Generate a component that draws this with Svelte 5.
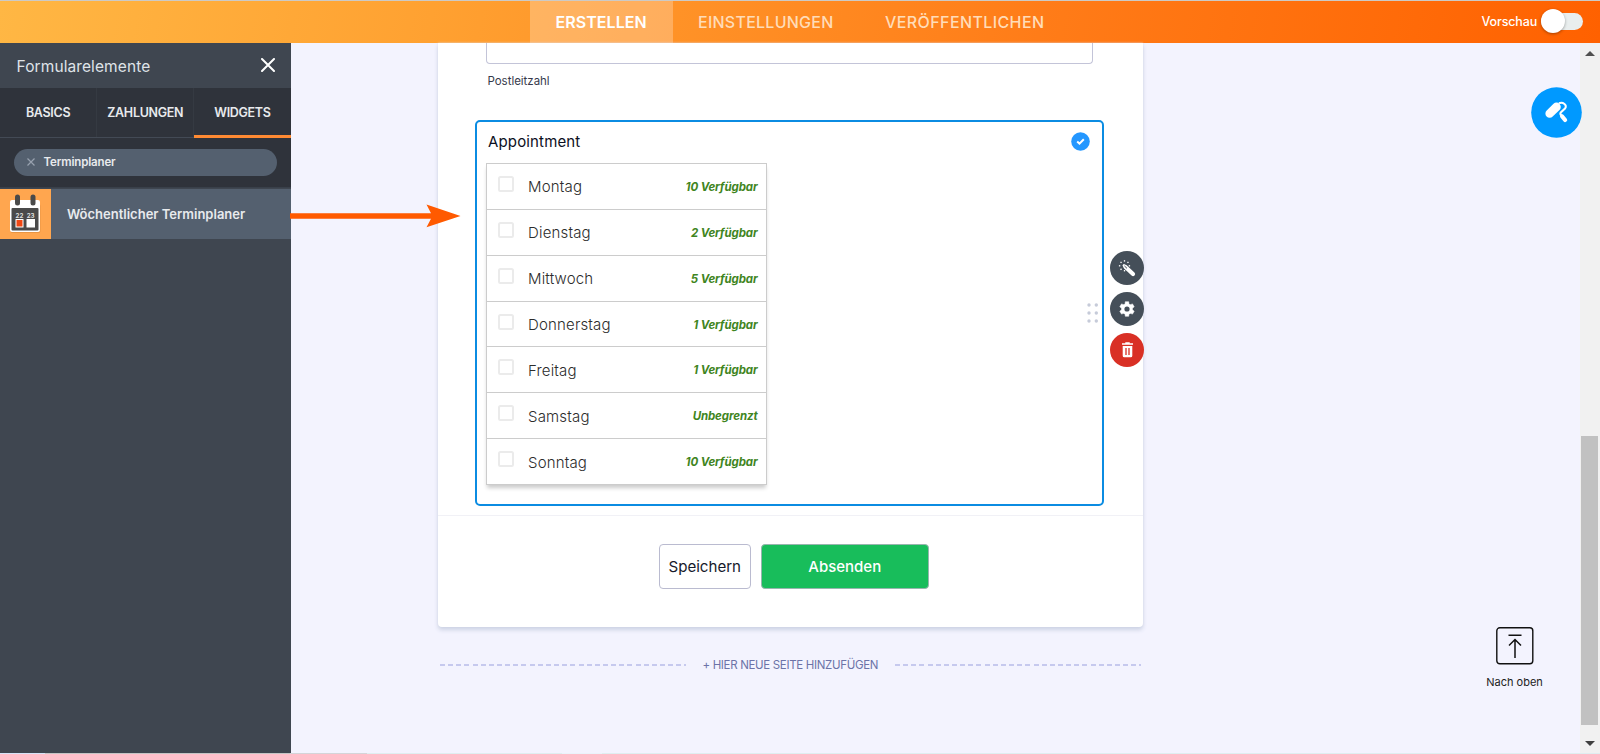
<script>
  const days = [
    ['Montag', '10 Verfügbar'],
    ['Dienstag', '2 Verfügbar'],
    ['Mittwoch', '5 Verfügbar'],
    ['Donnerstag', '1 Verfügbar'],
    ['Freitag', '1 Verfügbar'],
    ['Samstag', 'Unbegrenzt'],
    ['Sonntag', '10 Verfügbar']
  ];
  const rays = [0, 45, 90, 180, 225, 270, 315];
  const teeth = [0, 60, 120, 180, 240, 300];
</script>

<div class="app">
  <header>
    <nav>
      <a class="on"><span>ERSTELLEN</span></a>
      <a><span>EINSTELLUNGEN</span></a>
      <a class="publish"><span>VERÖFFENTLICHEN</span></a>
    </nav>
    <div class="preview"><span>Vorschau</span><div class="toggle"><i></i></div></div>
  </header>

  <div class="body">
    <aside>
      <div class="title">
        <span>Formularelemente</span>
        <svg width="14" height="14" viewBox="0 0 14 14"><path d="M1 1 13 13M13 1 1 13" stroke="#fff" stroke-width="2" stroke-linecap="round" /></svg>
      </div>
      <div class="tabs"><div>BASICS</div><div>ZAHLUNGEN</div><div class="on">WIDGETS</div></div>
      <div class="search">
        <div class="pill">
          <svg width="8" height="8" viewBox="0 0 8 8"><path d="M.5.5 7.5 7.5M7.5.5.5 7.5" stroke="#98a1af" stroke-width="1.200" /></svg>
          <span>Terminplaner</span>
        </div>
      </div>
      <div class="widget">
        <svg width="51" height="50" viewBox="0 0 51 50">
          <rect width="51" height="50" fill="#ffa64f" />
          <rect x="10.500" y="15" width="30" height="29" rx="2" fill="#d98a3e" opacity=".6" />
          <rect x="10" y="11" width="30" height="32" rx="2" fill="#fff" />
          <rect x="11.500" y="19" width="27" height="22.500" rx="1" fill="#4a4a4a" />
          <rect x="15" y="5.500" width="5" height="11" rx="2.500" fill="#4a4a4a" />
          <rect x="30.500" y="5.500" width="5" height="11" rx="2.500" fill="#4a4a4a" />
          <text x="15.500" y="28.500" font-size="6.200" font-weight="700" fill="#ddd">22</text>
          <text x="26.700" y="28.500" font-size="6.200" font-weight="700" fill="#ddd">23</text>
          <rect x="15.500" y="30" width="8" height="8.500" fill="#fff" />
          <rect x="16.500" y="31" width="6" height="6.500" fill="#f04713" />
          <rect x="26.500" y="30" width="8.500" height="8.500" fill="#fff" />
        </svg>
        <span>Wöchentlicher Terminplaner</span>
      </div>
    </aside>

    <main>
      <section class="card">
        <div class="input"></div>
        <div class="hint">Postleitzahl</div>
        <div class="field">
          <div class="head">
            <span>Appointment</span>
            <svg width="19" height="19" viewBox="0 0 19 19"><circle cx="9.500" cy="9.500" r="9.300" fill="#2497ff" /><path d="m6.200 9.500 2.300 2.200 4.300-4.500" fill="none" stroke="#fff" stroke-width="2" /></svg>
          </div>
          <div class="list">
            {#each days as [day, free]}
              <div class="row"><i></i><span>{day}</span><b>{free}</b></div>
            {/each}
          </div>
          <svg class="drag" width="12" height="20" viewBox="0 0 12 20" fill="#c6cbd9">
            {#each [2, 10, 18] as y}<circle cx="2" cy={y} r="1.700" /><circle cx="9.300" cy={y} r="1.700" />{/each}
          </svg>
          <div class="tools">
            <svg width="34" height="34" viewBox="0 0 34 34">
              <circle cx="17" cy="17" r="17" fill="#454f59" />
              <path d="m15.500 16 7.500 7" stroke="#fff" stroke-width="4.200" stroke-linecap="round" />
              <path d="m14 14.500 2 2" stroke="#fff" stroke-width="2.800" stroke-linecap="round" />
              <path d="m14.700 15.200 2 1.900" stroke="#454f59" stroke-width="1" stroke-linecap="round" />
              {#each rays as r}<path d="M14.500 10.600V9.200" stroke="#fff" stroke-width="1.300" transform={`rotate(${r} 14.500 14.800)`} />{/each}
            </svg>
            <svg width="34" height="34" viewBox="0 0 34 34">
              <circle cx="17" cy="17" r="17" fill="#454f59" />
              {#each teeth as r}<path d="M14.900 12.500 15.300 9.700h3.400l.4 2.800z" fill="#fff" stroke="#fff" stroke-width=".5" stroke-linejoin="round" transform={`rotate(${r} 17 17)`} />{/each}
              <circle cx="17" cy="17" r="4.100" fill="none" stroke="#fff" stroke-width="3" />
            </svg>
            <svg width="34" height="34" viewBox="0 0 34 34">
              <circle cx="17" cy="17" r="17" fill="#d93025" />
              <path d="M12 11h11M15.300 10h4.400" stroke="#fff" stroke-width="1.700" />
              <path d="M12.700 13h9.600v9.800a1.500 1.500 0 0 1-1.500 1.500h-6.600a1.500 1.500 0 0 1-1.500-1.500z" fill="#fff" />
              <path d="M16 15v7M19 15v7" stroke="#d93025" stroke-width="1.300" />
            </svg>
          </div>
        </div>
        <div class="buttons"><button>Speichern</button><button class="go">Absenden</button></div>
      </section>
      <div class="newpage"><i></i><span>+ HIER NEUE SEITE HINZUFÜGEN</span><i></i></div>
      <svg class="arrow" width="171" height="24" viewBox="0 0 171 24"><path d="M0 9.200H141L136.500.5 170.500 12 136.500 23.200 141 14.800H0z" fill="#ff5a00" /></svg>
      <svg class="paint" width="51" height="51" viewBox="0 0 51 51">
        <circle cx="25.500" cy="25.500" r="25.300" fill="#0099ff" />
        <path d="m18.700 26.500 6.800-6.600" stroke="#fff" stroke-width="8.600" stroke-linecap="round" />
        <path d="M28 16.300c3.800-1.700 8.800 1.800 6 5.200l-4 3.700c-1.500 1.600-.2 2.700 1.200 4" fill="none" stroke="#fff" stroke-width="2.100" />
        <path d="m31.200 29.500 2.900 3.500" stroke="#fff" stroke-width="4.200" stroke-linecap="round" />
      </svg>
      <div class="totop">
        <svg width="38" height="38" viewBox="0 0 38 38" fill="none" stroke="#111"><rect x=".8" y=".8" width="36" height="36" rx="3" stroke-width="1.400" /><path d="M12.500 8.200h13M19 31V13M13 18.500l6-6 6 6" stroke-width="1.500" /></svg>
        <span>Nach oben</span>
      </div>
    </main>

    <div class="scroll">
      <svg width="10" height="5" viewBox="0 0 10 5"><path d="M0 5 5 0l5 5z" fill="#505050" /></svg>
      <div class="thumb"></div>
      <svg width="10" height="5" viewBox="0 0 10 5"><path d="M0 0h10L5 5z" fill="#404040" /></svg>
    </div>
  </div>
  <footer></footer>
</div>

<style>
  :global(body) { overflow: hidden; }
  * { box-sizing: border-box; }
  svg { display: block; flex: none; }
  .app { width: 1600px; height: 754px; display: flex; flex-direction: column; font-family: Inter, "Liberation Sans", sans-serif; white-space: nowrap; overflow: hidden; }
  header { height: 42.500px; flex: none; border-top: 1px solid #cdcac5; background: linear-gradient(100deg, #ffb744 0%, #ffa131 27%, #ff7c18 65%, #ff6100 100%); display: flex; padding-left: 530px; padding-right: 17px; justify-content: space-between; }
  nav { display: flex; }
  nav a { padding: 0 0 0 25.500px; width: 187px; display: flex; align-items: center; font-size: 16px; font-weight: 500; color: #ffdcb8; letter-spacing: .25px; }
  nav a.on { background: rgba(255,255,255,.25); color: #fff; font-weight: 600; width: 142.500px; letter-spacing: .05px; }
  nav a.publish { letter-spacing: .4px; }
  .preview { display: flex; align-items: center; gap: 3.500px; color: #fff; font-size: 12.500px; font-weight: 500; letter-spacing: -.15px; }
  .toggle { width: 42.500px; height: 17px; display: flex; align-items: center; background: #e9eeee; border-radius: 9px; margin-top: -1px; }
  .toggle i { width: 24px; height: 24px; flex: none; border-radius: 50%; background: #fff; box-shadow: 0 1px 3px rgba(0,0,0,.35); }
  .body { flex: 1; display: flex; min-height: 0; }
  footer { height: 1px; flex: none; background: linear-gradient(90deg, #d5e3f7 45px, #c5c5c5 45px 290px, #d4d4d8 290px 367px, #dfeef0 367px 562px, #eaf3fa 562px 602px, #dfeef0 602px); }
  aside { width: 290.500px; background: #3f4650; color: #e8eaed; flex: none; }
  .title { height: 45px; display: flex; align-items: center; justify-content: space-between; padding: 0 15.500px 1px 16.500px; font-size: 15.500px; letter-spacing: .1px; color: #dfe3e8; }
  .title span { padding-top: 3px; }
  .tabs { height: 50px; display: flex; background: #2f333b; border-bottom: 1px solid #434a55; font-size: 12.500px; font-weight: 600; letter-spacing: -.3px; }
  .tabs div { flex: 1; display: flex; align-items: center; justify-content: center; border-right: 1px solid #353a42; }
  .tabs .on { border-right: 0; border-bottom: 3.500px solid #ff8a33; padding-top: 3.500px; margin-bottom: -1px; }
  .search { height: 50px; background: #2f333b; padding: 11px 14px; border-bottom: 1px solid #39404a; }
  .pill { height: 27.500px; border-radius: 14px; background: #54606f; display: flex; align-items: center; padding-left: 12.500px; gap: 9px; font-size: 11.500px; font-weight: 600; letter-spacing: -.15px; }
  .widget { margin-top: 1.500px; height: 50px; background: #54606f; display: flex; align-items: center; gap: 16px; font-size: 13px; font-weight: 600; overflow: hidden; }
  main { flex: 1; position: relative; background: #f3f3fe; }
  .card { width: 705px; height: 584px; margin-left: 147px; background: #fff; border-radius: 0 0 4px 4px; box-shadow: 0 3px 4px #cdd3e4, 0 0 2px #dfe0ee; padding-left: 37.500px; display: flex; flex-direction: column; }
  .input { width: 607px; height: 21.500px; border: 1px solid #c3c4d8; border-top: 0; border-radius: 0 0 4px 4px; margin-left: 11px; }
  .hint { margin: 8.500px 0 0 12.500px; height: 16px; line-height: 16px; font-size: 11.500px; letter-spacing: -.03px; color: #373a4c; }
  .field { position: relative; margin-top: 31.500px; width: 629px; height: 385.500px; border: 2px solid #0b8ce2; border-radius: 5px; padding: 10px 9px; }
  .head { display: flex; align-items: center; justify-content: space-between; padding: 0 3.500px 0 2px; height: 19px; font-size: 15px; letter-spacing: .15px; color: #0c0f22; }
  .list { width: 281px; margin-top: 12px; border: 1px solid #ccc; box-shadow: 0 4px 4px -1px #ccc; }
  .row { height: 45.870px; display: flex; align-items: center; padding: 1px 8.500px 0 11px; border-bottom: 1px solid #ccc; }
  .row:last-child { border: 0; height: 45px; }
  .row i { width: 16px; height: 16px; border: 2px solid #ebebeb; border-radius: 2.500px; margin-top: -6px; }
  .row span { margin-left: 14px; font-size: 15px; letter-spacing: .17px; color: #2c2c2c; font-weight: 300; flex: 1; }
  .row b { font-size: 11.500px; letter-spacing: -.12px; font-style: italic; font-weight: 700; color: #3f8522; }
  .drag { position: absolute; right: 3px; top: 180.500px; }
  .tools { position: absolute; left: 633px; top: 128.500px; display: flex; flex-direction: column; gap: 7.300px; }
  .buttons { margin: 9.500px 0 0 -37.500px; border-top: 1px solid #f1f1f6; padding: 28px 0 0 221px; display: flex; gap: 10px; }
  button { height: 45px; width: 92.500px; border: 1px solid #babbd0; border-radius: 4px; background: #fff; font: 400 15.100px Inter, sans-serif; color: #171a2b; padding: 0; }
  .go { width: 167.500px; background: #18bd5b; color: #fff; border-color: #98b5ae; font-weight: 500; font-size: 15px; }
  .newpage { width: 700.500px; margin: 30.500px 0 0 149.500px; display: flex; align-items: center; height: 16px; gap: 16.500px; font-size: 11.500px; letter-spacing: -.33px; color: #6c73a8; }
  .newpage i { flex: 1; height: 1.500px; background: repeating-linear-gradient(90deg, #c6c9ee 0 5px, transparent 5px 8.150px); }
  .arrow { position: absolute; left: -1px; top: 161px; }
  .paint { position: absolute; left: 1240.500px; top: 44.500px; z-index: 2; }
  .totop { position: absolute; left: 1184px; top: 584px; width: 80px; display: flex; flex-direction: column; align-items: center; gap: 10px; font-size: 11px; color: #222; }
  .scroll { width: 20.500px; background: #f1f1f1; display: flex; flex-direction: column; align-items: center; padding: 8px 0 7px; }
  .thumb { width: 17px; height: 289px; background: #c1c1c1; margin: 380px 0 auto; }
</style>
